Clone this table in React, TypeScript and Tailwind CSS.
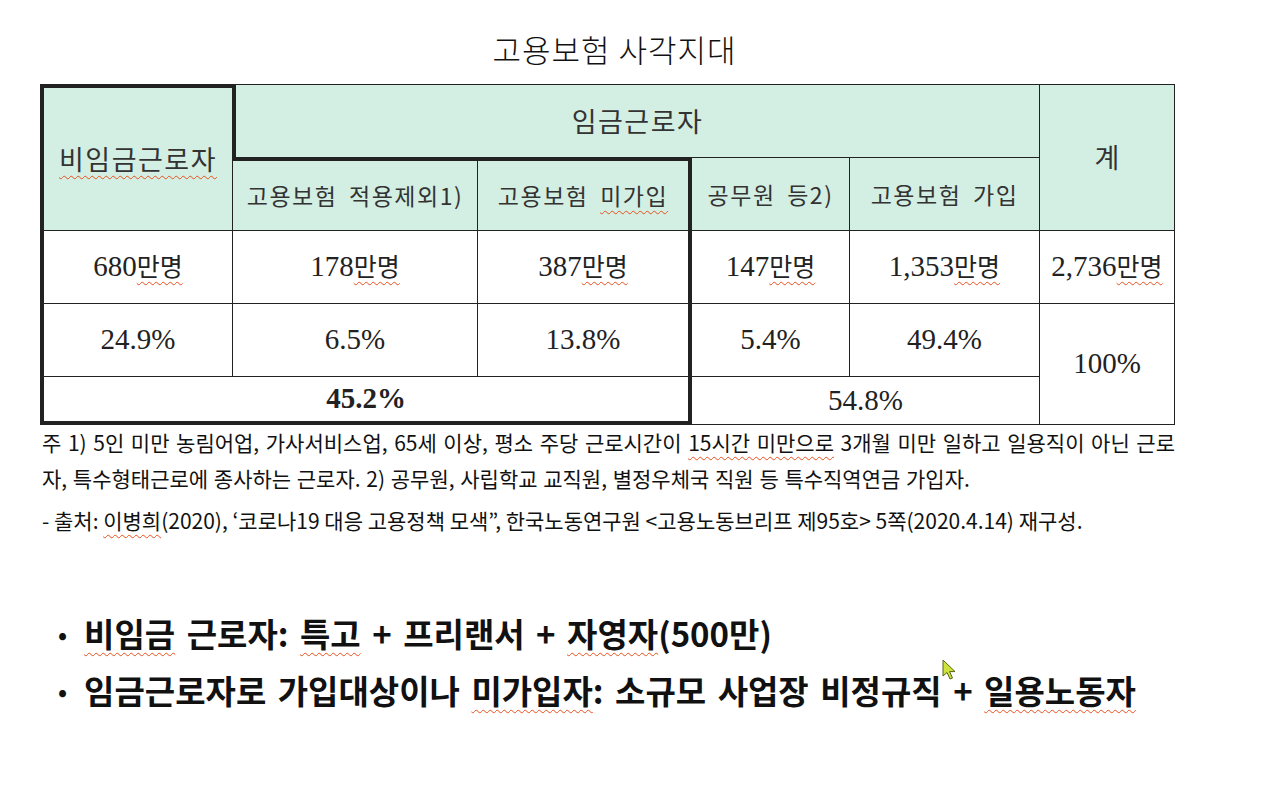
const sans = "font-['Noto_Sans_CJK_KR','Noto_Sans',sans-serif]";
const serifNum = "font-['Liberation_Serif','Noto_Sans_CJK_KR',serif]";
const spell = "underline decoration-wavy decoration-[#e8501c] decoration-1 underline-offset-[5px]";

const cell = "flex items-center justify-center border-[#222]";
const head = `${cell} bg-[#d3eee2] text-[#333] ${sans}`;
const sub = "text-[23px] tracking-[1.5px] [word-spacing:5px]";
const num = `${cell} bg-white text-[#222] ${serifNum} text-[29px]`;

const Cursor = () => (
  <svg className="absolute left-[942px] top-[659px]" width="16" height="22" viewBox="0 0 16 22">
    <path d="M1 1 L1 17 L5 13.5 L8 20 L10.5 19 L7.6 12.6 L13 12.6 Z" fill="#cde23a" stroke="#5a6414" strokeWidth="1" strokeLinejoin="round" />
  </svg>
);

const Man = () => <span className={`${sans} text-[25px] ${spell}`}>만명</span>;

const App = () => {
  return (
    <div className="relative w-[1280px] h-[806px] bg-white overflow-hidden">
      <div className="pl-[40px] pt-[28px] w-[1175px]">
        {/* Title */}
        <div className={`h-[42px] flex items-center justify-center pl-[14px] text-[31px] font-light tracking-[1px] text-[#111] ${sans}`}>
          고용보험 사각지대
        </div>

        {/* Table */}
        <div className="mt-[14px] grid grid-cols-[192px_245px_215px_157px_190px_136px] grid-rows-[73px_73px_73px_73px_49px]">
          <div className={`${head} row-span-2 border-t-4 border-l-4 text-[27px] tracking-[1.5px]`}>
            <span className={spell}>비임금근로자</span>
          </div>
          <div className={`${head} col-span-4 border-t border-l-4 text-[27px] tracking-[1.5px]`}>임금근로자</div>
          <div className={`${head} row-span-2 border-t border-l border-r text-[27px]`}>계</div>

          <div className={`${head} border-t-4 border-l ${sub}`}>고용보험 적용제외1)</div>
          <div className={`${head} border-t-4 border-l border-r-4 ${sub}`}>
            <span>
              고용보험 <span className={spell}>미가입</span>
            </span>
          </div>
          <div className={`${head} border-t ${sub}`}>공무원 등2)</div>
          <div className={`${head} border-t border-l ${sub}`}>고용보험 가입</div>

          <div className={`${num} border-t border-l-4`}>
            <span>680<Man /></span>
          </div>
          <div className={`${num} border-t border-l`}>
            <span>178<Man /></span>
          </div>
          <div className={`${num} border-t border-l border-r-4`}>
            <span>387<Man /></span>
          </div>
          <div className={`${num} border-t`}>
            <span>147<Man /></span>
          </div>
          <div className={`${num} border-t border-l`}>
            <span>1,353<Man /></span>
          </div>
          <div className={`${num} border-t border-l border-r`}>
            <span>2,736<Man /></span>
          </div>

          <div className={`${num} border-t border-l-4`}>24.9%</div>
          <div className={`${num} border-t border-l`}>6.5%</div>
          <div className={`${num} border-t border-l border-r-4`}>13.8%</div>
          <div className={`${num} border-t`}>5.4%</div>
          <div className={`${num} border-t border-l`}>49.4%</div>
          <div className={`${num} row-span-2 border-t border-l border-r border-b`}>100%</div>

          <div className={`${num} col-span-3 border-t border-l-4 border-r-4 border-b-4 font-bold text-[#111]`}>45.2%</div>
          <div className={`${num} col-span-2 border-t border-b`}>54.8%</div>
        </div>

        {/* Notes */}
        <div className={`pl-[2px] text-[21px] text-[#111] ${sans}`}>
          <div className="h-[34px] leading-[34px] whitespace-nowrap text-justify [text-align-last:justify]">
            주 1) 5인 미만 농림어업, 가사서비스업, 65세 이상, 평소 주당 근로시간이{" "}
            <span className={spell}>15시간 미만으로</span> 3개월 미만 일하고 일용직이 아닌 근로
          </div>
          <div className="h-[38px] leading-[38px] whitespace-nowrap [word-spacing:1px]">
            자, 특수형태근로에 종사하는 근로자. 2) 공무원, 사립학교 교직원, 별정우체국 직원 등 특수직역연금 가입자.
          </div>
          <div className="h-[42px] leading-[46px] whitespace-nowrap">
            - 출처: <span className={spell}>이병희</span>(2020), ‘코로나19 대응 고용정책 모색”, 한국노동연구원 &lt;고용노동브리프 제95호&gt; 5쪽(2020.4.14) 재구성.
          </div>
        </div>
      </div>

      {/* Bullets */}
      <ul className={`mt-[66px] pl-[58px] text-[33px] font-bold text-[#111] ${sans}`}>
        <li className="h-[57px] flex items-center gap-[17px]">
          <span className="text-[24px]">•</span>
          <span className="[word-spacing:4px]">
            <span className={spell}>비임금</span> 근로자: <span className={spell}>특고</span> + 프리랜서 +{" "}
            <span className={spell}>자영자</span>(500만)
          </span>
        </li>
        <li className="h-[57px] flex items-center gap-[17px]">
          <span className="text-[24px]">•</span>
          <span className="[word-spacing:4px]">
            임금근로자로 가입대상이나 <span className={spell}>미가입자</span>: 소규모 사업장 비정규직 +{" "}
            <span className={spell}>일용노동자</span>
          </span>
        </li>
      </ul>

      <Cursor />
    </div>
  );
};

export default App;
